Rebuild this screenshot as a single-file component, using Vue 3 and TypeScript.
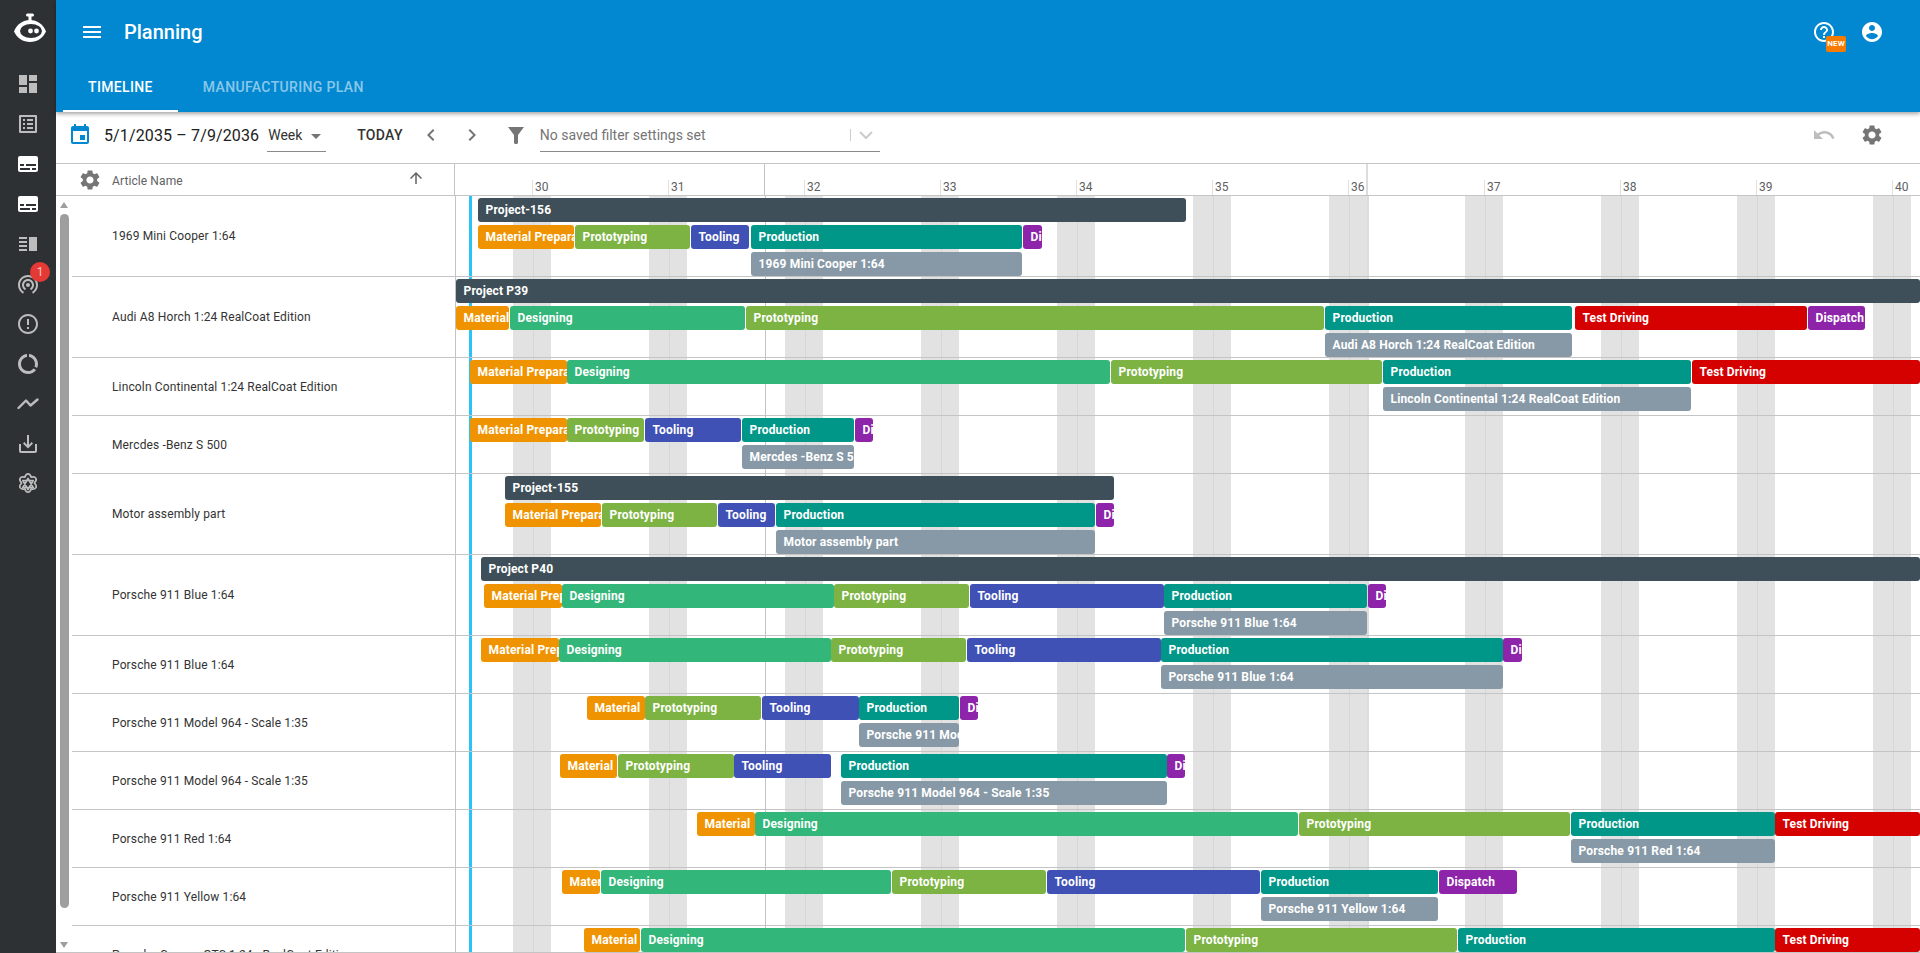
<template>
  <div class="app">
    <aside class="rail">
      <div class="rail-logo">
        <svg width="40" height="40" viewBox="0 0 40 40">
          <rect x="20.5" y="3" width="3" height="6" fill="#fff" />
          <rect x="18" y="1.5" width="8" height="3" rx="1.5" fill="#fff" />
          <path d="M6 19.5C9 12 15 8 22 8s13 4 16 11.5C35 26 29 30 22 30S9 26 6 19.5z" fill="#fff" />
          <ellipse cx="23" cy="19" rx="11" ry="7" fill="#2d3133" />
          <circle cx="22.5" cy="19" r="2.4" fill="#fff" />
          <circle cx="28.5" cy="19" r="2.4" fill="#fff" />
        </svg>
      </div>
      <div v-for="icon in railIcons" :key="icon.id" class="rail-item">
        <svg width="24" height="24" viewBox="0 0 24 24" class="rail-icon" :class="{ bright: icon.bright }">
          <path :d="icon.d" />
        </svg>
        <span v-if="icon.badge" class="rail-badge">{{ icon.badge }}</span>
      </div>
      <div class="rail-item">
        <svg width="24" height="24" viewBox="0 0 24 24" class="rail-icon">
          <polyline points="2.5,16 10,8.5 14.5,13.5 21.5,7.5" fill="none" stroke="#bdbdbd" stroke-width="2.4" stroke-linecap="round" stroke-linejoin="round" />
        </svg>
      </div>
      <div class="rail-item">
        <svg width="24" height="24" viewBox="0 0 24 24" class="rail-icon">
          <path d="M19 12v7H5v-7H3v7c0 1.1.9 2 2 2h14c1.1 0 2-.9 2-2v-7h-2zm-6 .67l2.59-2.58L17 11.5l-5 5-5-5 1.41-1.41L11 12.67V3h2z" />
        </svg>
      </div>
      <div class="rail-item">
        <svg width="24" height="24" viewBox="0 0 24 24" fill="none" stroke="#bdbdbd" stroke-width="1.7" stroke-linejoin="round">
          <path d="M12 1.8c1.6 0 2.6 1.4 3.2 3.4 2.1-.5 3.9-.3 4.7 1.1.8 1.4 0 3-1.5 4.7 1.5 1.7 2.3 3.3 1.5 4.7-.8 1.4-2.6 1.6-4.7 1.1-.6 2-1.6 3.4-3.2 3.4s-2.6-1.4-3.2-3.4c-2.1.5-3.9.3-4.7-1.1-.8-1.4 0-3 1.5-4.7C4.1 9.3 3.3 7.7 4.100 6.300c.8-1.400 2.600-1.600 4.700-1.100.6-2 1.600-3.400 3.200-3.400z" />
          <path d="M12 6.500l5.200 9H6.800zM12 17.500l-5.200-9h10.400z" />
        </svg>
      </div>
    </aside>

    <main class="main">
      <header class="appbar">
        <div class="appbar-top">
          <svg class="menu-icon" width="24" height="24" viewBox="0 0 24 24" fill="#fff">
            <path d="M3 18h18v-2H3v2zm0-5h18v-2H3v2zm0-7v2h18V6H3z" />
          </svg>
          <h1 class="appbar-title">Planning</h1>
          <div class="appbar-actions">
            <div class="help">
              <svg width="24" height="24" viewBox="0 0 24 24" fill="#fff">
                <path d="M11 18h2v-2h-2v2zm1-16C6.48 2 2 6.48 2 12s4.48 10 10 10 10-4.48 10-10S17.52 2 12 2zm0 18c-4.41 0-8-3.59-8-8s3.59-8 8-8 8 3.59 8 8-3.59 8-8 8zm0-14c-2.21 0-4 1.79-4 4h2c0-1.1.9-2 2-2s2 .9 2 2c0 2-3 1.750-3 5h2c0-2.250 3-2.500 3-5 0-2.210-1.790-4-4-4z" />
              </svg>
              <span class="new-badge">NEW</span>
            </div>
            <svg width="24" height="24" viewBox="0 0 24 24" fill="#fff">
              <path d="M12 2C6.48 2 2 6.48 2 12s4.48 10 10 10 10-4.48 10-10S17.52 2 12 2zm0 3c1.66 0 3 1.34 3 3s-1.34 3-3 3-3-1.34-3-3 1.34-3 3-3zm0 14.2c-2.5 0-4.71-1.28-6-3.22.03-1.99 4-3.08 6-3.08 1.99 0 5.97 1.09 6 3.08-1.29 1.94-3.5 3.22-6 3.22z" />
            </svg>
          </div>
        </div>
        <nav class="tabs">
          <a class="tab active">TIMELINE</a>
          <a class="tab">MANUFACTURING PLAN</a>
        </nav>
      </header>

      <div class="toolbar">
        <svg class="cal-icon" width="24" height="24" viewBox="0 0 24 24" fill="#0288d1">
          <path d="M17 12h-5v5h5v-5zM16 1v2H8V1H6v2H5c-1.11 0-1.99.9-1.99 2L3 19c0 1.1.89 2 2 2h14c1.1 0 2-.9 2-2V5c0-1.1-.9-2-2-2h-1V1h-2zm3 18H5V8h14v11z" />
        </svg>
        <span class="date-range">5/1/2035 – 7/9/2036</span>
        <div class="select week-select">
          <span>Week</span>
          <i class="caret"></i>
        </div>
        <span class="today">TODAY</span>
        <svg class="nav-prev" width="24" height="24" viewBox="0 0 24 24" fill="#757575">
          <path d="M15.41 7.41L14 6l-6 6 6 6 1.41-1.41L10.83 12z" />
        </svg>
        <svg class="nav-next" width="24" height="24" viewBox="0 0 24 24" fill="#757575">
          <path d="M10 6L8.59 7.41 13.17 12l-4.58 4.59L10 18l6-6z" />
        </svg>
        <svg class="filter-icon" width="24" height="24" viewBox="0 0 24 24" fill="#757575">
          <path d="M4 4h16l-6 8v7.500c0 .8-.7 1.500-1.500 1.500h-1c-.8 0-1.500-.7-1.500-1.500V12z" />
        </svg>
        <div class="select filter-select">
          <span>No saved filter settings set</span>
          <i class="sep"></i>
          <svg width="20" height="20" viewBox="0 0 20 20" fill="none" stroke="#cccccc" stroke-width="2">
            <path d="M4 7l6 6 6-6" />
          </svg>
        </div>
        <div class="toolbar-right">
          <svg width="24" height="24" viewBox="0 0 24 24" fill="#bdbdbd">
            <path d="M12.5 8c-2.65 0-5.05.99-6.9 2.6L2 7v9h9l-3.62-3.62c1.39-1.16 3.16-1.88 5.12-1.88 3.54 0 6.55 2.31 7.6 5.5l2.37-.78C21.08 11.03 17.15 8 12.5 8z" />
          </svg>
          <svg width="24" height="24" viewBox="0 0 24 24" fill="#757575">
            <path :d="gearPath" />
          </svg>
        </div>
      </div>

      <section class="planner">
        <div class="planner-head">
          <div class="head-name">
            <svg width="24" height="24" viewBox="0 0 24 24" fill="#757575">
              <path :d="gearPath" />
            </svg>
            <span class="head-label">Article Name</span>
            <svg class="sort-icon" width="18" height="18" viewBox="0 0 24 24" fill="#616161">
              <path d="M4 12l1.41 1.41L11 7.83V20h2V7.83l5.58 5.59L20 12l-8-8-8 8z" />
            </svg>
          </div>
          <div class="head-time">
            <span v-for="w in weeks" :key="w.label" class="week" :style="{ left: w.x + 'px' }">{{ w.label }}</span>
            <i v-for="(m, i) in monthLines" :key="m" class="month-tick" :class="{ soft: i === 1 }" :style="{ left: m + 'px' }"></i>
          </div>
        </div>

        <div class="planner-body">
          <div class="time-grid">
            <i v-for="s in stripes" :key="s" class="stripe" :style="{ left: s + 'px' }"></i>
            <i v-for="w in weeks" :key="w.label" class="week-line" :style="{ left: w.x + 'px' }"></i>
            <i v-for="(m, i) in monthLines" :key="m" class="month-line" :class="{ soft: i === 1 }" :style="{ left: m + 'px' }"></i>
            <i class="now-line"></i>
          </div>

          <div class="rows">
            <div v-for="(row, i) in rows" :key="i" class="row" :style="{ height: row.h + 'px' }">
              <div class="row-name" :class="{ tall: row.h > 60 }"><span>{{ row.name }}</span></div>
              <div class="row-time">
                <div
                  v-for="(b, j) in row.bars"
                  :key="j"
                  class="bar"
                  :class="b.kind"
                  :style="barStyle(b)"
                >{{ b.label }}</div>
              </div>
            </div>
          </div>

          <div class="scrollbar">
            <i class="sb-up"></i>
            <i class="sb-thumb"></i>
            <i class="sb-down"></i>
          </div>
        </div>
      </section>
    </main>
  </div>
</template>

<script setup lang="ts">
interface Bar {
  label: string
  kind: string
  from: number
  to: number
  lane: number
}

interface Row {
  name: string
  h: number
  bars: Bar[]
}

// x of the timeline's left edge on the page
const ORIGIN = 456
const LANE = 27

const gearPath =
  'M19.14 12.94c.04-.3.06-.61.06-.94 0-.32-.02-.64-.07-.94l2.03-1.58c.18-.14.23-.41.12-.61l-1.92-3.32c-.12-.22-.37-.29-.59-.22l-2.39.96c-.5-.38-1.03-.7-1.62-.94l-.36-2.54c-.04-.24-.24-.41-.48-.41h-3.84c-.24 0-.43.17-.47.41l-.36 2.54c-.59.24-1.13.57-1.62.94l-2.39-.96c-.22-.08-.47 0-.59.22L2.74 8.87c-.12.21-.08.47.12.61l2.03 1.58c-.05.3-.09.63-.09.94s.02.64.07.94l-2.03 1.58c-.18.14-.23.41-.12.61l1.92 3.32c.12.22.37.29.59.22l2.39-.96c.5.38 1.03.7 1.62.94l.36 2.54c.05.24.24.41.48.41h3.84c.24 0 .44-.17.47-.41l.36-2.54c.59-.24 1.13-.56 1.62-.94l2.39.96c.22.08.47 0 .59-.22l1.92-3.32c.12-.22.07-.47-.12-.61l-2.01-1.58zM12 15.6c-1.98 0-3.6-1.62-3.6-3.6s1.62-3.6 3.6-3.6 3.6 1.62 3.6 3.6-1.62 3.6-3.6 3.6z'

const railIcons = [
  { id: 'dash', d: 'M3 13h8V3H3v10zm0 8h8v-6H3v6zm10 0h8V11h-8v10zm0-18v6h8V3h-8z' },
  { id: 'list', d: 'M19 5v14H5V5h14m1.1-2H3.9c-.5 0-.9.4-.9.9v16.2c0 .4.4.9.9.9h16.2c.4 0 .9-.5.9-.9V3.9c0-.5-.5-.9-.9-.9zM11 7h6v2h-6V7zm0 4h6v2h-6v-2zm0 4h6v2h-6zM7 7h2v2H7zm0 4h2v2H7zm0 4h2v2H7z' },
  { id: 'sub1', bright: true, d: 'M20 4H4c-1.1 0-2 .9-2 2v12c0 1.1.9 2 2 2h16c1.1 0 2-.9 2-2V6c0-1.1-.9-2-2-2zM4 12h4v2H4v-2zm10 6H4v-2h10v2zm6 0h-4v-2h4v2zm0-4H10v-2h10v2z' },
  { id: 'sub2', bright: true, d: 'M20 4H4c-1.1 0-2 .9-2 2v12c0 1.1.9 2 2 2h16c1.1 0 2-.9 2-2V6c0-1.1-.9-2-2-2zM4 12h4v2H4v-2zm10 6H4v-2h10v2zm6 0h-4v-2h4v2zm0-4H10v-2h10v2z' },
  { id: 'split', d: 'M3 15h8v-2H3v2zm0 4h8v-2H3v2zm0-8h8V9H3v2zm0-6v2h8V5H3zm10 0v14h8V5h-8z' },
  { id: 'signal', badge: '1', d: 'M12 11c-1.1 0-2 .9-2 2s.9 2 2 2 2-.9 2-2-.9-2-2-2zm6 2c0-3.31-2.69-6-6-6s-6 2.69-6 6c0 2.22 1.21 4.15 3 5.19l1-1.74c-1.19-.7-2-1.97-2-3.45 0-2.21 1.79-4 4-4s4 1.79 4 4c0 1.48-.81 2.75-2 3.45l1 1.74c1.79-1.04 3-2.97 3-5.19zM12 3C6.48 3 2 7.48 2 13c0 3.7 2.01 6.92 4.99 8.65l1-1.73C5.61 18.53 4 15.96 4 13c0-4.42 3.58-8 8-8s8 3.58 8 8c0 2.96-1.61 5.53-4 6.92l1 1.73c2.99-1.73 5-4.95 5-8.65 0-5.52-4.48-10-10-10z' },
  { id: 'error', d: 'M11 15h2v2h-2zm0-8h2v6h-2zm.99-5C6.47 2 2 6.48 2 12s4.47 10 9.99 10C17.52 22 22 17.52 22 12S17.52 2 11.99 2zM12 20c-4.42 0-8-3.58-8-8s3.58-8 8-8 8 3.58 8 8-3.58 8-8 8z' },
  { id: 'usage', d: 'M13 2.05v3.03c3.39.49 6 3.39 6 6.92 0 .9-.18 1.75-.48 2.54l2.6 1.53c.56-1.24.88-2.62.88-4.07 0-5.18-3.95-9.45-9-9.95zM12 19c-3.87 0-7-3.13-7-7 0-3.53 2.61-6.43 6-6.92V2.05c-5.06.5-9 4.76-9 9.95 0 5.52 4.47 10 9.99 10 3.31 0 6.24-1.61 8.06-4.09l-2.6-1.53C16.17 17.98 14.21 19 12 19z' }
]

const weeks = Array.from({ length: 11 }, (_, i) => ({
  label: String(30 + i),
  x: 533 + i * 136 - ORIGIN
}))
const stripes = Array.from({ length: 11 }, (_, i) => 513 + i * 136 - ORIGIN)
const monthLines = [765 - ORIGIN, 1367 - ORIGIN]

const KIND: Record<string, string> = {
  P: 'project',
  M: 'material',
  D: 'designing',
  R: 'prototyping',
  T: 'tooling',
  O: 'production',
  X: 'dispatch',
  E: 'testing',
  A: 'article'
}

const LABEL: Record<string, string> = {
  M: 'Material Preparation',
  D: 'Designing',
  R: 'Prototyping',
  T: 'Tooling',
  O: 'Production',
  X: 'Dispatch',
  E: 'Test Driving'
}

// each bar: kind, from, to, optional label (only for project bars)
type Raw = [string, number, number, string?]

function row(name: string, h: number, project: Raw | null, phases: Raw[], article: [number, number] | null): Row {
  const lane = project ? 1 : 0
  const bars: Bar[] = []
  if (project) bars.push(toBar(project, 0))
  phases.forEach((p) => bars.push(toBar(p, lane)))
  if (article) bars.push({ label: name, kind: 'article', from: article[0], to: article[1], lane: lane + 1 })
  return { name, h, bars }
}

function toBar(r: Raw, lane: number): Bar {
  // narrow material bars only carry the short name
  const short = r[0] === 'M' && r[2] - r[1] < 70
  return { label: r[3] ?? (short ? 'Material' : LABEL[r[0]]), kind: KIND[r[0]], from: r[1], to: r[2], lane }
}

const rows: Row[] = [
  row('1969 Mini Cooper 1:64', 81, ['P', 478, 1186, 'Project-156'],
    [['M', 478, 574], ['R', 575, 690], ['T', 691, 749], ['O', 751, 1022], ['X', 1023, 1042]], [751, 1022]),
  row('Audi A8 Horch 1:24 RealCoat Edition', 81, ['P', 456, 1920, 'Project P39'],
    [['M', 456, 509], ['D', 510, 745], ['R', 746, 1324], ['O', 1325, 1572], ['E', 1575, 1807], ['X', 1808, 1865]], [1325, 1572]),
  row('Lincoln Continental 1:24 RealCoat Edition', 58, null,
    [['M', 470, 567], ['D', 567, 1110], ['R', 1111, 1382], ['O', 1383, 1691], ['E', 1692, 1920]], [1383, 1691]),
  row('Mercdes -Benz S 500', 58, null,
    [['M', 470, 567], ['R', 567, 644], ['T', 645, 741], ['O', 742, 854], ['X', 855, 873]], [742, 854]),
  row('Motor assembly part', 81, ['P', 505, 1114, 'Project-155'],
    [['M', 505, 601], ['R', 602, 717], ['T', 718, 775], ['O', 776, 1095], ['X', 1096, 1114]], [776, 1095]),
  row('Porsche 911 Blue 1:64', 81, ['P', 481, 1920, 'Project P40'],
    [['M', 484, 562], ['D', 562, 834], ['R', 834, 969], ['T', 970, 1164], ['O', 1164, 1367], ['X', 1368, 1386]], [1164, 1367]),
  row('Porsche 911 Blue 1:64', 58, null,
    [['M', 481, 559], ['D', 559, 831], ['R', 831, 966], ['T', 967, 1161], ['O', 1161, 1503], ['X', 1503, 1522]], [1161, 1503]),
  row('Porsche 911 Model 964 - Scale 1:35', 58, null,
    [['M', 587, 645], ['R', 645, 761], ['T', 762, 859], ['O', 859, 959], ['X', 960, 978]], [859, 959]),
  row('Porsche 911 Model 964 - Scale 1:35', 58, null,
    [['M', 560, 617], ['R', 618, 734], ['T', 734, 831], ['O', 841, 1167], ['X', 1167, 1185]], [841, 1167]),
  row('Porsche 911 Red 1:64', 58, null,
    [['M', 697, 755], ['D', 755, 1298], ['R', 1299, 1570], ['O', 1571, 1775], ['E', 1775, 1920]], [1571, 1775]),
  row('Porsche 911 Yellow 1:64', 58, null,
    [['M', 562, 600], ['D', 601, 891], ['R', 892, 1046], ['T', 1047, 1260], ['O', 1261, 1438], ['X', 1439, 1517]], [1261, 1438]),
  row('Porsche Carrera GTS 1:24 - RealCoat Edition', 58, null,
    [['M', 584, 640], ['D', 641, 1185], ['R', 1186, 1457], ['O', 1458, 1775], ['E', 1775, 1920]], [1458, 1775])
]

function barStyle(b: Bar) {
  return {
    left: `${b.from - ORIGIN}px`,
    width: `${b.to - b.from}px`,
    top: `${2 + b.lane * LANE}px`
  }
}
</script>

<style>
html,
body {
  margin: 0;
  height: 100%;
  overflow: hidden;
  background: #fff;
}
</style>

<style scoped>
.app {
  display: flex;
  height: 953px;
  font-family: Roboto, "Liberation Sans", sans-serif;
  color: #333;
}

.rail {
  width: 56px;
  flex: none;
  background: #2d3133;
  display: flex;
  flex-direction: column;
  align-items: center;
}

.rail-logo {
  height: 64px;
  display: flex;
  align-items: center;
  justify-content: center;
}

.rail-item {
  position: relative;
  height: 40px;
  width: 56px;
  display: flex;
  align-items: center;
  justify-content: center;
}

.rail-icon {
  fill: #bdbdbd;
}

.rail-icon.bright {
  fill: #fff;
}

.rail-badge {
  position: absolute;
  top: -2px;
  left: 30px;
  width: 20px;
  height: 20px;
  border-radius: 50%;
  background: #e53935;
  color: #f5c6c6;
  font-size: 12px;
  line-height: 20px;
  text-align: center;
}

.main {
  flex: 1;
  min-width: 0;
  display: flex;
  flex-direction: column;
}

.appbar {
  height: 112px;
  background: #0288d1;
  box-shadow: 0 2px 4px rgba(0, 0, 0, 0.35);
  position: relative;
  z-index: 2;
  display: flex;
  flex-direction: column;
  flex: none;
}

.appbar-top {
  height: 64px;
  display: flex;
  align-items: center;
  padding: 0 36px 0 24px;
  color: #fff;
}

.menu-icon {
  flex: none;
}

.appbar-title {
  margin: 0 0 0 20px;
  font-size: 20px;
  font-weight: 500;
}

.appbar-actions {
  margin-left: auto;
  display: flex;
  align-items: center;
  gap: 24px;
}

.help {
  position: relative;
  height: 24px;
}

.new-badge {
  position: absolute;
  left: 14px;
  top: 16px;
  width: 20px;
  height: 16px;
  border-radius: 2px;
  background: #f57c00;
  color: #fff;
  font-size: 8px;
  font-weight: 700;
  letter-spacing: 0.2px;
  line-height: 16px;
  text-align: center;
}

.tabs {
  height: 48px;
  display: flex;
  padding-left: 7px;
}

.tab {
  padding: 0 25px;
  height: 48px;
  line-height: 46px;
  box-sizing: border-box;
  font-size: 14px;
  font-weight: 500;
  letter-spacing: 0.35px;
  color: rgba(255, 255, 255, 0.55);
}

.tab.active {
  color: #fff;
  border-bottom: 2px solid #fff;
}

.toolbar {
  height: 51px;
  flex: none;
  box-sizing: border-box;
  display: flex;
  align-items: center;
  padding: 0 36px 5px 12px;
}

.date-range {
  margin-left: 12px;
  font-size: 16px;
  letter-spacing: 0.13px;
  color: #212121;
  white-space: nowrap;
}

.select {
  display: flex;
  align-items: center;
  height: 33px;
  border-bottom: 1px solid #8a8a8a;
  box-sizing: border-box;
  font-size: 14px;
}

.week-select {
  width: 59px;
  margin-left: 8px;
  color: #333;
  padding-left: 1px;
}

.caret {
  margin: 4px 5px 0 auto;
  border-left: 5px solid transparent;
  border-right: 5px solid transparent;
  border-top: 5px solid #757575;
}

.today {
  margin-left: 31px;
  font-size: 14px;
  font-weight: 500;
  letter-spacing: 0.3px;
  color: #333;
}

.nav-prev {
  margin-left: 16px;
}

.nav-next {
  margin-left: 17px;
}

.filter-icon {
  margin-left: 20px;
}

.filter-select {
  width: 340px;
  margin-left: 12px;
  color: #757575;
}

.sep {
  margin-left: auto;
  margin-right: 5px;
  width: 1px;
  height: 12px;
  background: #ccc;
}

.filter-select svg {
  margin-right: 4px;
}

.toolbar-right {
  margin-left: auto;
  display: flex;
  gap: 24px;
}

.planner {
  flex: 1;
  min-height: 0;
  display: flex;
  flex-direction: column;
  overflow: hidden;
  border-top: 1px solid #c4c4c4;
  border-bottom: 1px solid #c4c4c4;
}

.planner-head {
  height: 31px;
  flex: none;
  display: flex;
  border-bottom: 1px solid #c4c4c4;
}

.head-name {
  width: 399px;
  flex: none;
  box-sizing: border-box;
  border-right: 1px solid #c4c4c4;
  display: flex;
  align-items: center;
  padding-left: 22px;
}

.head-label {
  margin: 2px 0 0 10px;
  font-size: 12px;
  letter-spacing: 0.1px;
  color: #616161;
}

.sort-icon {
  margin: 0 29px 3px auto;
}

.head-time {
  position: relative;
  flex: 1;
}

.week {
  position: absolute;
  bottom: 0;
  height: 15px;
  padding-left: 2px;
  border-left: 1px solid #e0e0e0;
  font-size: 12px;
  line-height: 15px;
  color: #616161;
}

.month-tick {
  position: absolute;
  top: 0;
  bottom: 0;
  width: 1px;
  background: #c4c4c4;
}

.month-tick.soft {
  width: 2px;
  background: #dcdcdc;
}

.planner-body {
  position: relative;
  flex: 1;
  min-height: 0;
  overflow: hidden;
}

.time-grid {
  position: absolute;
  left: 400px;
  right: 0;
  top: 0;
  bottom: 0;
}

.stripe {
  position: absolute;
  top: 0;
  bottom: 0;
  width: 38px;
  background: #e2e2e2;
}

.week-line {
  position: absolute;
  top: 0;
  bottom: 0;
  width: 1px;
  background: #d6d6d6;
}

.month-line {
  position: absolute;
  top: 0;
  bottom: 0;
  width: 1px;
  background: #c4c4c4;
}

.month-line.soft {
  width: 2px;
  background: #dcdcdc;
}

.now-line {
  position: absolute;
  top: 0;
  bottom: 0;
  left: 13px;
  width: 3px;
  background: #29c4f5;
}

.rows {
  position: relative;
  margin-left: 16px;
}

.row {
  display: flex;
  box-sizing: border-box;
  border-bottom: 1px solid #c4c4c4;
}

.row-name {
  width: 383px;
  flex: none;
  display: flex;
  align-items: center;
  font-size: 12px;
  letter-spacing: 0.14px;
  color: #333;
}

.row-name.tall {
  padding-bottom: 1px;
  box-sizing: border-box;
}

.row-name span {
  padding-left: 40px;
  white-space: nowrap;
}

.row-time {
  position: relative;
  flex: 1;
  border-left: 1px solid #c4c4c4;
  margin-bottom: -1px;
}

.bar {
  position: absolute;
  height: 24px;
  box-sizing: border-box;
  padding-left: 7.5px;
  border-radius: 3px;
  overflow: hidden;
  white-space: nowrap;
  color: #fff;
  font-size: 12px;
  font-weight: 700;
  letter-spacing: 0.15px;
  line-height: 24px;
}

.project {
  background: #3f4f59;
}
.material {
  background: #ef9400;
}
.designing {
  background: #33b679;
}
.prototyping {
  background: #7cb342;
}
.tooling {
  background: #3f51b5;
}
.production {
  background: #009688;
}
.dispatch {
  background: #8e24aa;
}
.testing {
  background: #d50000;
}
.article {
  background: #8799a6;
}

.scrollbar {
  position: absolute;
  left: 4px;
  top: 0;
  bottom: 0;
  width: 9px;
}

.sb-up,
.sb-down {
  position: absolute;
  left: 0;
  border-left: 4.5px solid transparent;
  border-right: 4.5px solid transparent;
}

.sb-up {
  top: 6px;
  border-bottom: 6px solid #9e9e9e;
}

.sb-thumb {
  position: absolute;
  top: 18px;
  height: 694px;
  left: 0;
  width: 9px;
  border-radius: 5px;
  background: #9e9e9e;
}

.sb-down {
  top: 746px;
  border-top: 6px solid #9e9e9e;
}
</style>
